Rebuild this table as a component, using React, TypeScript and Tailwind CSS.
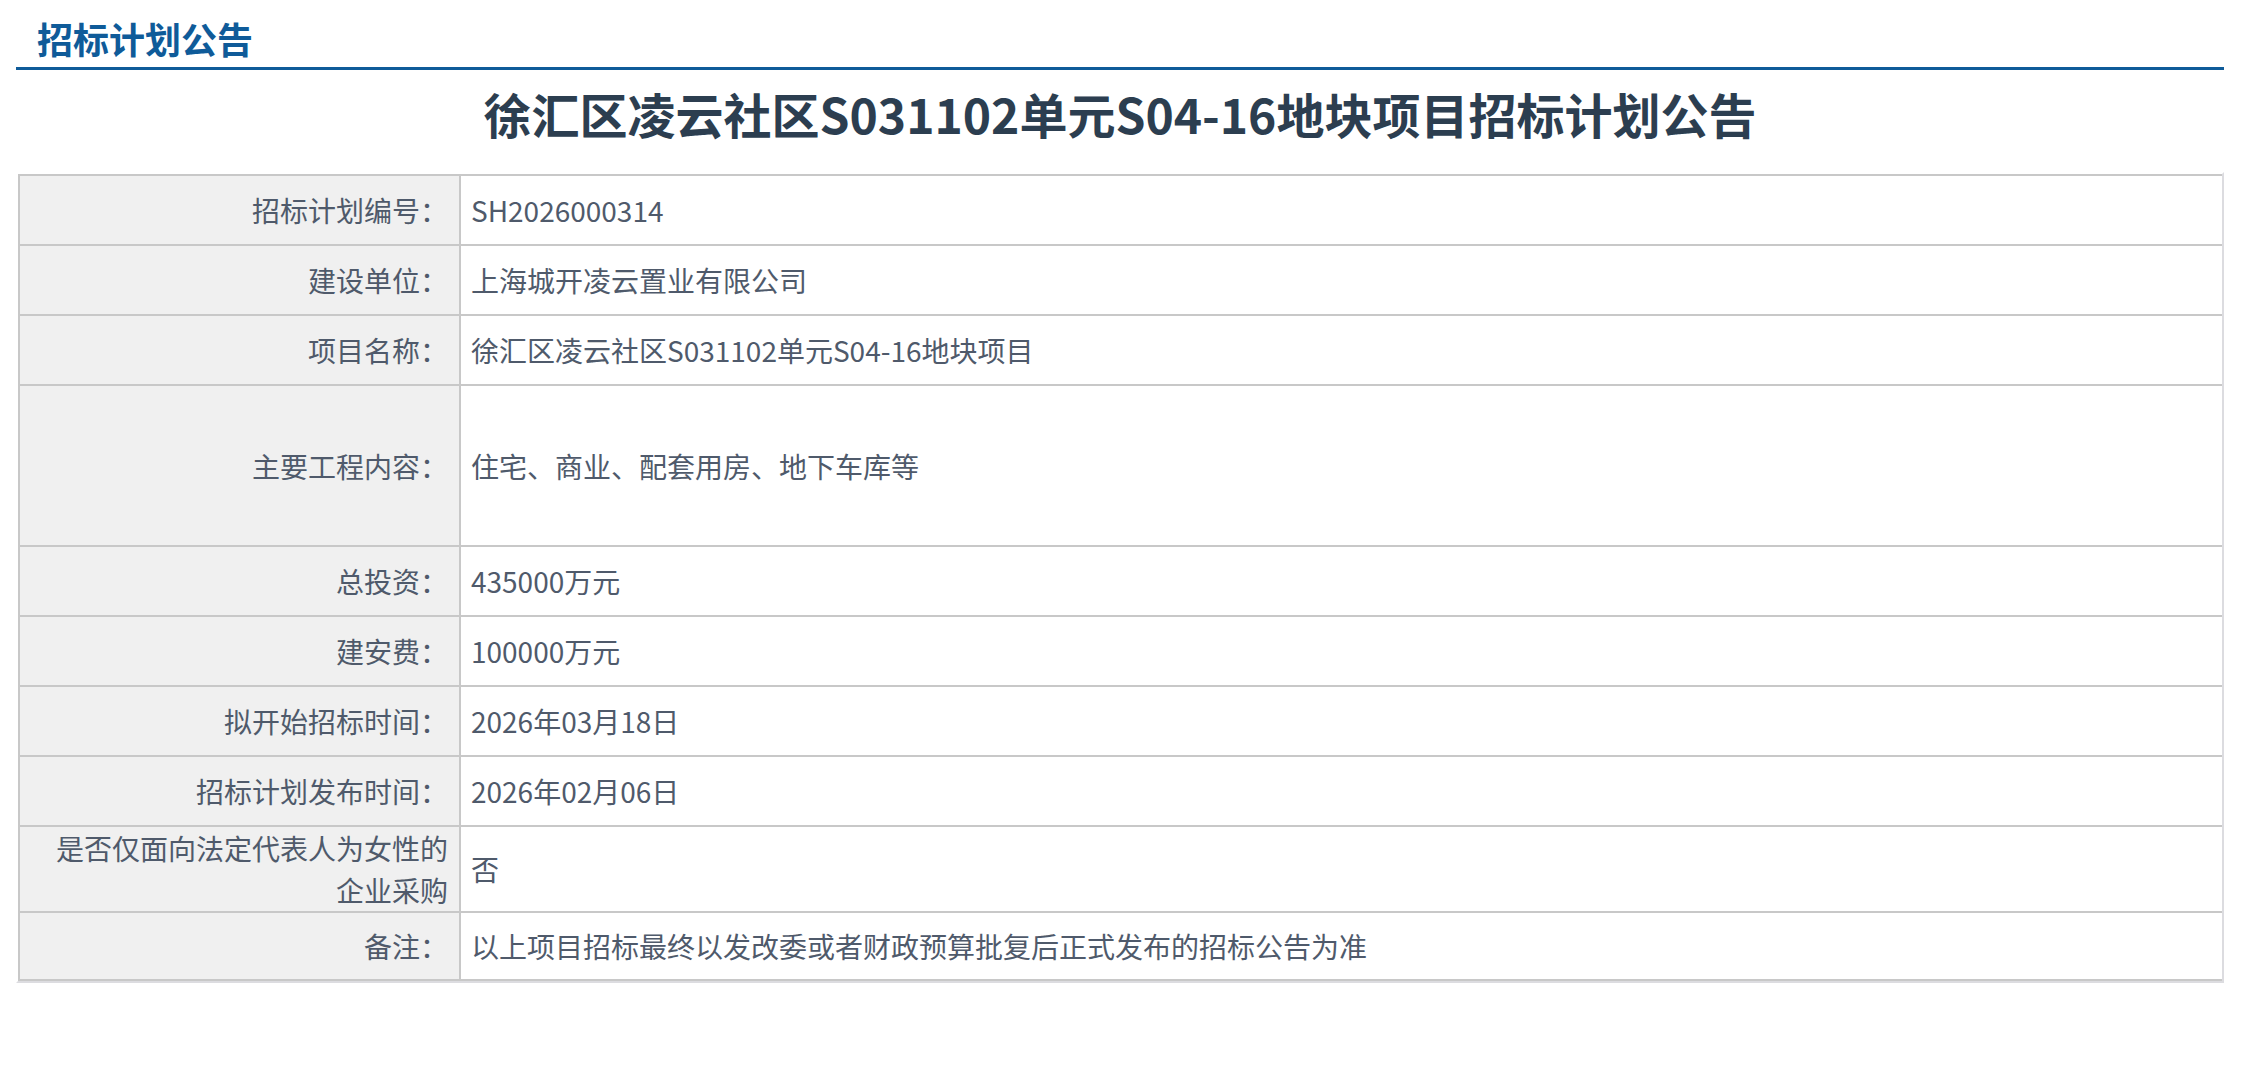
import React from "react";

type Row = { label: React.ReactNode; value: string; h: string; multi?: boolean };

const rows: Row[] = [
  { label: "招标计划编号：", value: "SH2026000314", h: "h-[70px]" },
  { label: "建设单位：", value: "上海城开凌云置业有限公司", h: "h-[70px]" },
  { label: "项目名称：", value: "徐汇区凌云社区S031102单元S04-16地块项目", h: "h-[70px]" },
  { label: "主要工程内容：", value: "住宅、商业、配套用房、地下车库等", h: "h-[161px]" },
  { label: "总投资：", value: "435000万元", h: "h-[70px]" },
  { label: "建安费：", value: "100000万元", h: "h-[70px]" },
  { label: "拟开始招标时间：", value: "2026年03月18日", h: "h-[70px]" },
  { label: "招标计划发布时间：", value: "2026年02月06日", h: "h-[70px]" },
  {
    label: (
      <>
        是否仅面向法定代表人为女性的
        <br />
        企业采购
      </>
    ),
    value: "否",
    h: "h-[86px]",
    multi: true,
  },
  { label: "备注：", value: "以上项目招标最终以发改委或者财政预算批复后正式发布的招标公告为准", h: "h-[70px]" },
];

export default function App() {
  return (
    <div
      className="w-[2248px] min-h-[1090px] bg-white"
      style={{ fontFamily: '"Noto Sans CJK SC", "Noto Sans", sans-serif' }}
    >
      <div className="ml-[16px] w-[2208px]">
        <div className="h-[67px] pl-[21px] pt-[10px] text-[36px] font-bold leading-[56px] text-[#0f5b99]">
          招标计划公告
        </div>
        <div className="h-[3px] bg-[#0f5b99]" />
        <div className="flex h-[102px] items-start justify-center pt-[10px] text-[48px] font-bold leading-[66px] text-[#2c3e50]">
          徐汇区凌云社区S031102单元S04-16地块项目招标计划公告
        </div>
        <div className="border-2 border-t-white border-l-white border-r-[#dcdce0] border-b-[#dcdce0]">
          <div className="grid grid-cols-[443px_1fr] text-[28px] text-[#4f5a6b]">
            {rows.map((r, i) => (
              <React.Fragment key={i}>
                <div
                  className={`${r.h} flex items-center justify-end border-t-2 border-l-2 border-r-2 border-[#c8c8c8] bg-[#f0f0f0] pr-[11px] text-right ${
                    i === rows.length - 1 ? "border-b-2" : ""
                  } ${r.multi ? "leading-[42px]" : "leading-[40px]"}`}
                >
                  <span>{r.label}</span>
                </div>
                <div
                  className={`${r.h} flex items-center border-t-2 border-[#c8c8c8] bg-white pl-[10px] leading-[40px] ${
                    i === rows.length - 1 ? "border-b-2" : ""
                  }`}
                >
                  {r.value}
                </div>
              </React.Fragment>
            ))}
          </div>
        </div>
      </div>
    </div>
  );
}
